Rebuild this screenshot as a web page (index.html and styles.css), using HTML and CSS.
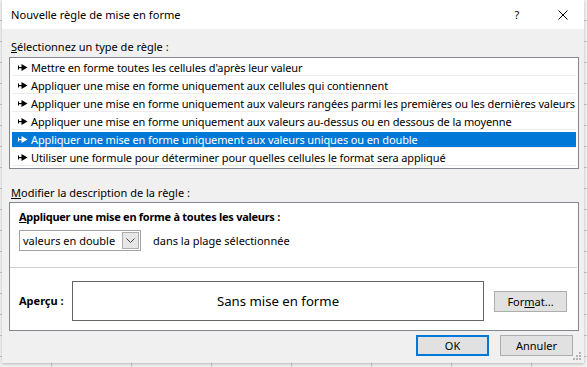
FILE: index.html
```html
<!DOCTYPE html>
<html lang="fr">
<head>
<meta charset="utf-8">
<title>Nouvelle règle de mise en forme</title>
<link rel="stylesheet" href="styles.css">
</head>
<body>
<div class="dialog">
  <div class="titlebar">
    <span class="title">Nouvelle règle de mise en forme</span>
    <span class="help">?</span>
    <span class="close"><svg width="10" height="10" viewBox="0 0 10 10"><path d="M0.5 0.5 L9.5 9.5 M9.5 0.5 L0.5 9.5" stroke="#000" stroke-width="1" fill="none"/></svg></span>
  </div>
  <div class="content">
    <div class="label"><u>S</u>électionnez un type de règle :</div>
    <div class="listbox">
      <div class="row"><div class="item"><svg class="arrow" width="10" height="7" viewBox="0 0 10 7"><rect x="0" y="1.5" width="1" height="4" fill="currentColor"/><rect x="0" y="3" width="5" height="1.2" fill="currentColor"/><path d="M3.5 0 L9.5 3.5 L3.5 7 Z" fill="currentColor"/></svg>Mettre en forme toutes les cellules d'après leur valeur</div></div>
      <div class="row"><div class="item"><svg class="arrow" width="10" height="7" viewBox="0 0 10 7"><rect x="0" y="1.5" width="1" height="4" fill="currentColor"/><rect x="0" y="3" width="5" height="1.2" fill="currentColor"/><path d="M3.5 0 L9.5 3.5 L3.5 7 Z" fill="currentColor"/></svg>Appliquer une mise en forme uniquement aux cellules qui contiennent</div></div>
      <div class="row"><div class="item"><svg class="arrow" width="10" height="7" viewBox="0 0 10 7"><rect x="0" y="1.5" width="1" height="4" fill="currentColor"/><rect x="0" y="3" width="5" height="1.2" fill="currentColor"/><path d="M3.5 0 L9.5 3.5 L3.5 7 Z" fill="currentColor"/></svg>Appliquer une mise en forme uniquement aux valeurs rangées parmi les premières ou les dernières valeurs</div></div>
      <div class="row"><div class="item"><svg class="arrow" width="10" height="7" viewBox="0 0 10 7"><rect x="0" y="1.5" width="1" height="4" fill="currentColor"/><rect x="0" y="3" width="5" height="1.2" fill="currentColor"/><path d="M3.5 0 L9.5 3.5 L3.5 7 Z" fill="currentColor"/></svg>Appliquer une mise en forme uniquement aux valeurs au-dessus ou en dessous de la moyenne</div></div>
      <div class="row"><div class="item selected"><svg class="arrow" width="10" height="7" viewBox="0 0 10 7"><rect x="0" y="1.5" width="1" height="4" fill="currentColor"/><rect x="0" y="3" width="5" height="1.2" fill="currentColor"/><path d="M3.5 0 L9.5 3.5 L3.5 7 Z" fill="currentColor"/></svg>Appliquer une mise en forme uniquement aux valeurs uniques ou en double</div></div>
      <div class="row"><div class="item"><svg class="arrow" width="10" height="7" viewBox="0 0 10 7"><rect x="0" y="1.5" width="1" height="4" fill="currentColor"/><rect x="0" y="3" width="5" height="1.2" fill="currentColor"/><path d="M3.5 0 L9.5 3.5 L3.5 7 Z" fill="currentColor"/></svg>Utiliser une formule pour déterminer pour quelles cellules le format sera appliqué</div></div>
    </div>
    <div class="label label-mod"><u>M</u>odifier la description de la règle :</div>
    <div class="desc">
      <div class="desc-top">
        <div class="bold bold-head"><u>A</u>ppliquer une mise en forme à toutes les valeurs :</div>
        <div class="select-row">
          <div class="select">
            <span class="select-text">valeurs en double</span>
            <span class="select-btn"><svg width="9" height="5" viewBox="0 0 9 5"><path d="M0.5 0.5 L4.5 4.5 L8.5 0.5" stroke="#444" fill="none"/></svg></span>
          </div>
          <span class="range">dans la plage sélectionnée</span>
        </div>
      </div>
      <div class="desc-bottom">
        <span class="bold preview-label">Aperçu :</span>
        <div class="preview">Sans mise en forme</div>
        <button class="btn">For<u>m</u>at...</button>
      </div>
    </div>
    <div class="actions">
      <button class="btn btn-default">OK</button>
      <button class="btn">Annuler</button>
    </div>
  </div>
  <svg class="grip" width="8" height="8" viewBox="0 0 8 8"><g fill="#b4b4b4"><rect x="6" y="0" width="2" height="2"/><rect x="3" y="3" width="2" height="2"/><rect x="6" y="3" width="2" height="2"/><rect x="0" y="6" width="2" height="2"/><rect x="3" y="6" width="2" height="2"/><rect x="6" y="6" width="2" height="2"/></g></svg>
</div>
</body>
</html>
```

FILE: styles.css
```css
html, body {
  margin: 0;
  padding: 0;
}
body {
  width: 587px;
  height: 367px;
  overflow: hidden;
  background-color: #f3f3f3;
  background-image:
    repeating-linear-gradient(to right, transparent 0 51px, #c6c6c6 51px 52px, transparent 52px 80px),
    repeating-linear-gradient(to bottom, transparent 0 20px, #c6c6c6 20px 21px);
  font-family: "Noto Sans", "Open Sans", sans-serif;
  font-size: 11px;
  color: #000;
}
.dialog {
  position: relative;
  margin-left: 2px;
  width: 582px;
  height: 363px;
  background: #f0f0f0;
  box-shadow: 0 1px 3px rgba(0,0,0,0.25);
  display: flex;
  flex-direction: column;
}
.titlebar {
  height: 29px;
  background: #fff;
  display: flex;
  align-items: center;
  padding-left: 9px;
}
.title {
  flex: 1;
  font-size: 11.1px;
}
.help {
  width: 10px;
  text-align: center;
  margin-right: 36px;
}
.close {
  display: flex;
  margin-right: 16px;
}
.content {
  padding: 0 5px 0 7px;
  display: flex;
  flex-direction: column;
}
.label {
  margin-top: 10px;
  height: 16px;
  line-height: 16px;
  padding-left: 2px;
}
u {
  text-decoration: underline;
  text-underline-offset: 1px;
}
.listbox {
  margin-top: 2px;
  width: 570px;
  height: 112px;
  box-sizing: border-box;
  border: 1px solid #828790;
  background: #fff;
}
.row {
  margin: 0 2px;
  padding-top: 2px;
  border-bottom: 1px solid #ececec;
}
.item {
  height: 15px;
  line-height: 15px;
  display: flex;
  align-items: center;
  padding-left: 6px;
  white-space: nowrap;
  letter-spacing: -0.11px;
}
.item.selected {
  background: #0078d7;
  color: #fff;
}
.arrow {
  margin-right: 3px;
  flex: none;
}
.label-mod {
  margin-top: 16px;
}
.desc {
  margin-top: 1px;
  width: 570px;
  height: 129px;
  box-sizing: border-box;
  border: 1px solid #828790;
  background: #fff;
  display: flex;
  flex-direction: column;
}
.desc-top {
  padding: 6px 0 16px 9px;
  border-bottom: 1px solid #cfcfcf;
  margin-right: 1px;
}
.bold {
  font-weight: bold;
  line-height: 16px;
  white-space: nowrap;
}
.bold-head {
  letter-spacing: -0.27px;
}
.select-row {
  margin-top: 5px;
  display: flex;
  align-items: center;
  white-space: nowrap;
}
.select {
  width: 122px;
  height: 21px;
  box-sizing: border-box;
  border: 1px solid #a2a2a2;
  display: flex;
  align-items: center;
  padding: 1px;
}
.select-text {
  flex: 1;
  padding-left: 2px;
}
.select-btn {
  width: 17px;
  height: 17px;
  box-sizing: border-box;
  border: 1px solid #adadad;
  background: #e6e6e6;
  display: flex;
  align-items: center;
  justify-content: center;
}
.range {
  margin-left: 12px;
}
.desc-bottom {
  flex: 1;
  display: flex;
  align-items: center;
  padding-left: 9px;
  padding-bottom: 6px;
  padding-top: 10px;
}
.preview-label {
  width: 53px;
}
.preview {
  width: 412px;
  height: 40px;
  box-sizing: border-box;
  border: 1px solid #646464;
  display: flex;
  align-items: center;
  justify-content: center;
  font-size: 13.2px;
}
.btn {
  width: 73px;
  height: 21px;
  box-sizing: border-box;
  border: 1px solid #adadad;
  background: #e1e1e1;
  font-family: inherit;
  font-size: 11px;
  color: #000;
  padding: 0;
  display: flex;
  align-items: center;
  justify-content: center;
}
.desc-bottom .btn {
  margin-left: 10px;
}
.actions {
  margin-top: 4px;
  width: 570px;
  display: flex;
  justify-content: flex-end;
  gap: 11px;
  padding-right: 6px;
  box-sizing: border-box;
}
.btn-default {
  border: 2px solid #0078d7;
}
.grip {
  position: absolute;
  right: 3px;
  bottom: 3px;
}
```
